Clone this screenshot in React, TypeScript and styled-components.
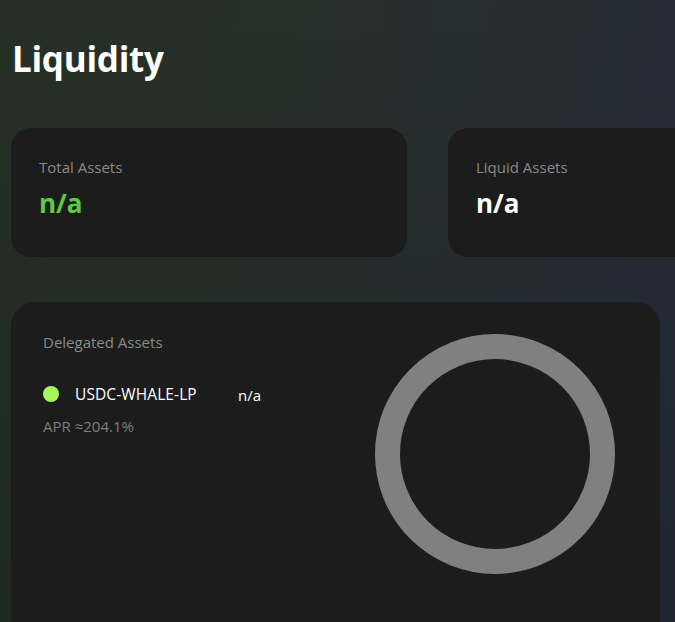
import React from "react";
import styled, { createGlobalStyle } from "styled-components";

const GlobalStyle = createGlobalStyle`
  html, body {
    margin: 0;
    padding: 0;
    width: 675px;
    height: 622px;
    overflow: hidden;
    background: #222722;
  }
  body {
    font-family: "Open Sans", "Noto Sans", "Liberation Sans", sans-serif;
    -webkit-font-smoothing: antialiased;
  }
  * { box-sizing: border-box; }
`;

const Page = styled.div`
  width: 675px;
  height: 622px;
  overflow: hidden;
  padding: 31px 0 0 11px;
  background:
    linear-gradient(180deg, rgba(0, 0, 0, 0) 0%, rgba(0, 0, 0, 0.18) 100%),
    linear-gradient(100deg, #263026 0%, #27302c 45%, #262c3a 100%);
`;

const Title = styled.h1`
  margin: 0 0 41px 1px;
  font-size: 35px;
  font-weight: 700;
  line-height: 56px;
  color: #ffffff;
  letter-spacing: -0.3px;
`;

const StatRow = styled.div`
  display: flex;
  gap: 41px;
  width: max-content;
  margin-bottom: 45px;
`;

const StatCard = styled.div`
  width: 396px;
  height: 129px;
  flex-shrink: 0;
  border-radius: 20px;
  background: #1c1c1c;
  padding: 28px 28px;
  display: flex;
  flex-direction: column;
  gap: 8px;
`;

const Label = styled.div`
  font-size: 15px;
  line-height: 22px;
  color: #8a8a8a;
`;

const Value = styled.div<{ $accent?: boolean }>`
  font-size: 26px;
  font-weight: 700;
  line-height: 34px;
  color: ${(p) => (p.$accent ? "#5ccb3f" : "#ffffff")};
`;

const DelegatedCard = styled.div`
  width: 649px;
  min-height: 340px;
  border-radius: 24px;
  background: #1c1c1c;
  padding: 29px 45px 32px 32px;
  display: flex;
  justify-content: space-between;
`;

const LeftCol = styled.div`
  display: flex;
  flex-direction: column;
`;

const AssetRow = styled.div`
  display: flex;
  align-items: center;
  margin-top: 30px;
  height: 22px;
`;

const Dot = styled.span<{ $color: string }>`
  width: 16px;
  height: 16px;
  border-radius: 50%;
  background: ${(p) => p.$color};
  margin-right: 16px;
  flex-shrink: 0;
`;

const AssetName = styled.span`
  font-size: 15.5px;
  color: #ffffff;
  width: 163px;
  letter-spacing: 0.1px;
`;

const AssetValue = styled.span`
  font-size: 15px;
  color: #ffffff;
  padding-top: 2px;
`;

const Apr = styled.div`
  font-size: 15px;
  line-height: 22px;
  color: #7e7e7e;
  margin-top: 10px;
`;

const Donut = styled.svg`
  width: 240px;
  height: 240px;
  margin-top: 3px;
  flex-shrink: 0;
`;

export default function App() {
  return (
    <>
      <GlobalStyle />
      <Page>
        <Title>Liquidity</Title>
        <StatRow>
          <StatCard>
            <Label>Total Assets</Label>
            <Value $accent>n/a</Value>
          </StatCard>
          <StatCard>
            <Label>Liquid Assets</Label>
            <Value>n/a</Value>
          </StatCard>
        </StatRow>
        <DelegatedCard>
          <LeftCol>
            <Label>Delegated Assets</Label>
            <AssetRow>
              <Dot $color="#a3f75b" />
              <AssetName>USDC-WHALE-LP</AssetName>
              <AssetValue>n/a</AssetValue>
            </AssetRow>
            <Apr>APR ≈204.1%</Apr>
          </LeftCol>
          <Donut viewBox="0 0 240 240">
            <circle cx="120" cy="120" r="107.5" fill="none" stroke="#808080" strokeWidth="25" />
          </Donut>
        </DelegatedCard>
      </Page>
    </>
  );
}
